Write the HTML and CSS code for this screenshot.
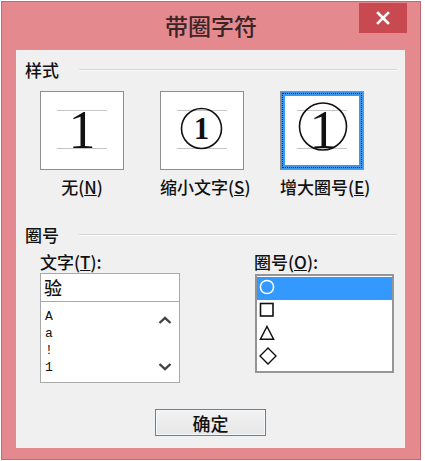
FILE: index.html
```html
<!DOCTYPE html>
<html>
<head>
    <title>带圈字符</title>
    <link rel="stylesheet" href="styles.css">
</head>
<body>
    <div class="window">
        <div class="titlebar">
            <span class="title">带圈字符</span>
            <span class="close">
                <svg width="14" height="14" viewBox="0 0 14 14"><path d="M2 2 L12 12 M12 2 L2 12" stroke="#fff" stroke-width="2.6" stroke-linecap="square"/></svg>
            </span>
        </div>
        <div class="client">
            <!-- 样式 -->
            <div class="group-head"><span>样式</span><span class="rule"></span></div>
            <div class="styles">
                <div class="style-item center">
                    <div class="preview">
                        <svg width="82" height="77" viewBox="0 0 82 77">
                            <path d="M16 18.5 H66 M16 56.5 H66" stroke="#c4c4c4" stroke-width="1"/>
                            <text x="41" y="56" text-anchor="middle" class="digit" font-size="54">1</text>
                        </svg>
                    </div>
                    <div class="caption">无(<u>N</u>)</div>
                </div>
                <div class="style-item">
                    <div class="preview">
                        <svg width="82" height="77" viewBox="0 0 82 77">
                            <path d="M16 18.5 H66 M16 56.5 H66" stroke="#c4c4c4" stroke-width="1"/>
                            <circle cx="40.5" cy="36.5" r="20" fill="none" stroke="#111" stroke-width="1.6"/>
                            <text x="40.5" y="47" text-anchor="middle" class="digit bold" font-size="31">1</text>
                        </svg>
                    </div>
                    <div class="caption">缩小文字(<u>S</u>)</div>
                </div>
                <div class="style-item">
                    <div class="preview selected">
                        <svg width="82" height="77" viewBox="0 0 82 77">
                            <path d="M16 18.5 H66 M16 56.5 H66" stroke="#c4c4c4" stroke-width="1"/>
                            <circle cx="42" cy="34.5" r="23.5" fill="none" stroke="#111" stroke-width="1.6"/>
                            <text x="42" y="56" text-anchor="middle" class="digit" font-size="54">1</text>
                        </svg>
                    </div>
                    <div class="caption">增大圈号(<u>E</u>)</div>
                </div>
            </div>

            <!-- 圈号 -->
            <div class="group-head second"><span>圈号</span><span class="rule"></span></div>
            <div class="fields">
                <div class="field">
                    <div class="field-label">文字(<u>T</u>):</div>
                    <div class="text-input">验</div>
                    <div class="char-list">
                        <div class="char-items">
                            <div>A</div>
                            <div>a</div>
                            <div>!</div>
                            <div>1</div>
                        </div>
                        <div class="scrollbar">
                            <svg width="14" height="8" viewBox="0 0 14 8"><path d="M1.5 7 L7 1.8 L12.5 7" fill="none" stroke="#444" stroke-width="2.4"/></svg>
                            <svg width="14" height="8" viewBox="0 0 14 8"><path d="M1.5 1 L7 6.2 L12.5 1" fill="none" stroke="#444" stroke-width="2.4"/></svg>
                        </div>
                    </div>
                </div>
                <div class="field">
                    <div class="field-label">圈号(<u>O</u>):</div>
                    <div class="ring-list">
                        <div class="ring-row active">
                            <svg width="16" height="16" viewBox="0 0 16 16"><circle cx="8" cy="8" r="6.6" fill="none" stroke="#fff" stroke-width="1.5"/></svg>
                        </div>
                        <div class="ring-row">
                            <svg width="16" height="16" viewBox="0 0 16 16"><rect x="1.5" y="1.5" width="12.5" height="12.5" fill="none" stroke="#111" stroke-width="1.6"/></svg>
                        </div>
                        <div class="ring-row">
                            <svg width="16" height="16" viewBox="0 0 16 16"><path d="M8 1.5 L14.6 14.2 H1.4 Z" fill="none" stroke="#111" stroke-width="1.5"/></svg>
                        </div>
                        <div class="ring-row">
                            <svg width="18" height="18" viewBox="0 0 18 18"><path d="M9 1 L17 9 L9 17 L1 9 Z" fill="none" stroke="#111" stroke-width="1.4"/></svg>
                        </div>
                    </div>
                </div>
            </div>

            <div class="actions">
                <button class="ok">确定</button>
            </div>
        </div>
    </div>
</body>
</html>
```

FILE: styles.css
```css
body {
    margin: 0;
    background: #fff;
    font-family: "Noto Sans CJK SC", "Noto Sans", sans-serif;
    font-weight: 500;
    color: #111;
}

.window {
    margin: 1px 0 0 1px;
    width: 418px;
    height: 457px;
    border: 1px solid #c36a70;
    background-color: #e4898e; /* marco rosado */
    display: flex;
    flex-direction: column;
}

.titlebar {
    height: 48px;
    display: grid;
    grid-template-columns: 1fr auto 1fr;
}

.title {
    grid-column: 2;
    font-size: 23px;
    line-height: 28px;
    padding-top: 9px;
    color: #3a2426;
}

.close {
    grid-column: 3;
    justify-self: end;
    align-self: start;
    margin: 1px 13px 0 0;
    width: 48px;
    height: 30px;
    background-color: #c84a50;
    display: flex;
    align-items: center;
    justify-content: center;
}

.client {
    margin-left: 14px;
    width: 389px;
    height: 398px;
    background-color: #f0f0f0;
}

.group-head {
    display: flex;
    align-items: center;
    margin-top: 10px;
    padding-left: 9px;
    font-size: 17px;
    line-height: 20px;
}

.group-head.second {
    margin-top: 28px;
}

.rule {
    flex: 1;
    height: 0;
    margin: 0 8px 0 20px;
    border-top: 1px solid #d6d6d6;
    border-bottom: 1px solid #fafafa;
}

.styles {
    display: flex;
    gap: 36px;
    padding-left: 24px;
    margin-top: 11px;
}

.style-item {
    width: 84px;
    display: flex;
    flex-direction: column;
    align-items: flex-start;
}

.style-item.center {
    align-items: center;
}

.preview {
    width: 84px;
    height: 79px;
    box-sizing: border-box;
    border: 1px solid #8e8e8e;
    background-color: #fff;
}

.preview svg {
    display: block;
}

.preview.selected {
    box-shadow: inset 0 0 0 4px #3a97f0;
    outline: 1px dotted #1c2c44;
    outline-offset: -3px;
}

.digit {
    font-family: "Liberation Serif", serif;
    font-weight: normal;
    fill: #111;
}

.digit.bold {
    font-weight: bold;
}

.caption {
    margin-top: 7px;
    font-size: 17px;
    line-height: 20px;
    white-space: nowrap;
}

.fields {
    display: flex;
    gap: 74px;
    padding-left: 24px;
    margin-top: 7px;
}

.field {
    width: 140px;
}

.field-label {
    font-size: 17px;
    line-height: 20px;
    white-space: nowrap;
}

.text-input {
    margin-top: 1px;
    height: 28px;
    box-sizing: border-box;
    border: 1px solid #a9a9a9;
    border-bottom: none;
    background-color: #fff;
    padding-left: 3px;
    font-size: 18px;
    line-height: 27px;
}

.char-list {
    height: 82px;
    box-sizing: border-box;
    border: 1px solid #a9a9a9;
    background-color: #fff;
    display: flex;
}

.char-items {
    flex: 1;
    padding: 6px 0 0 4px;
    font-family: "Liberation Mono", monospace;
    font-size: 13px;
    font-weight: normal;
    line-height: 17px;
}

.scrollbar {
    width: 28px;
    display: flex;
    flex-direction: column;
    justify-content: space-between;
    align-items: center;
    padding: 14px 0 11px;
}

.scrollbar svg {
    display: block;
}

.ring-list {
    margin: 2px 0 0 1px;
    width: 139px;
    height: 99px;
    box-sizing: border-box;
    border: 2px solid #959595;
    background-color: #fff;
    padding-top: 1px;
}

.ring-row {
    height: 23px;
    display: flex;
    align-items: center;
    padding-left: 2px;
}

.ring-row svg {
    display: block;
    margin-top: -4px;
}

.ring-row.active {
    background-color: #3399ff;
}

.actions {
    display: flex;
    justify-content: center;
    margin-top: 26px;
}

.ok {
    width: 111px;
    height: 27px;
    border: 1px solid #3d8ad6;
    box-shadow: inset 0 0 0 1px #f4f9fe;
    background: linear-gradient(#f3f3f3, #e6e6e6);
    font-family: "Noto Sans CJK SC", sans-serif;
    font-weight: 500;
    font-size: 18px;
    line-height: 20px;
    color: #111;
    padding: 0;
}
```
